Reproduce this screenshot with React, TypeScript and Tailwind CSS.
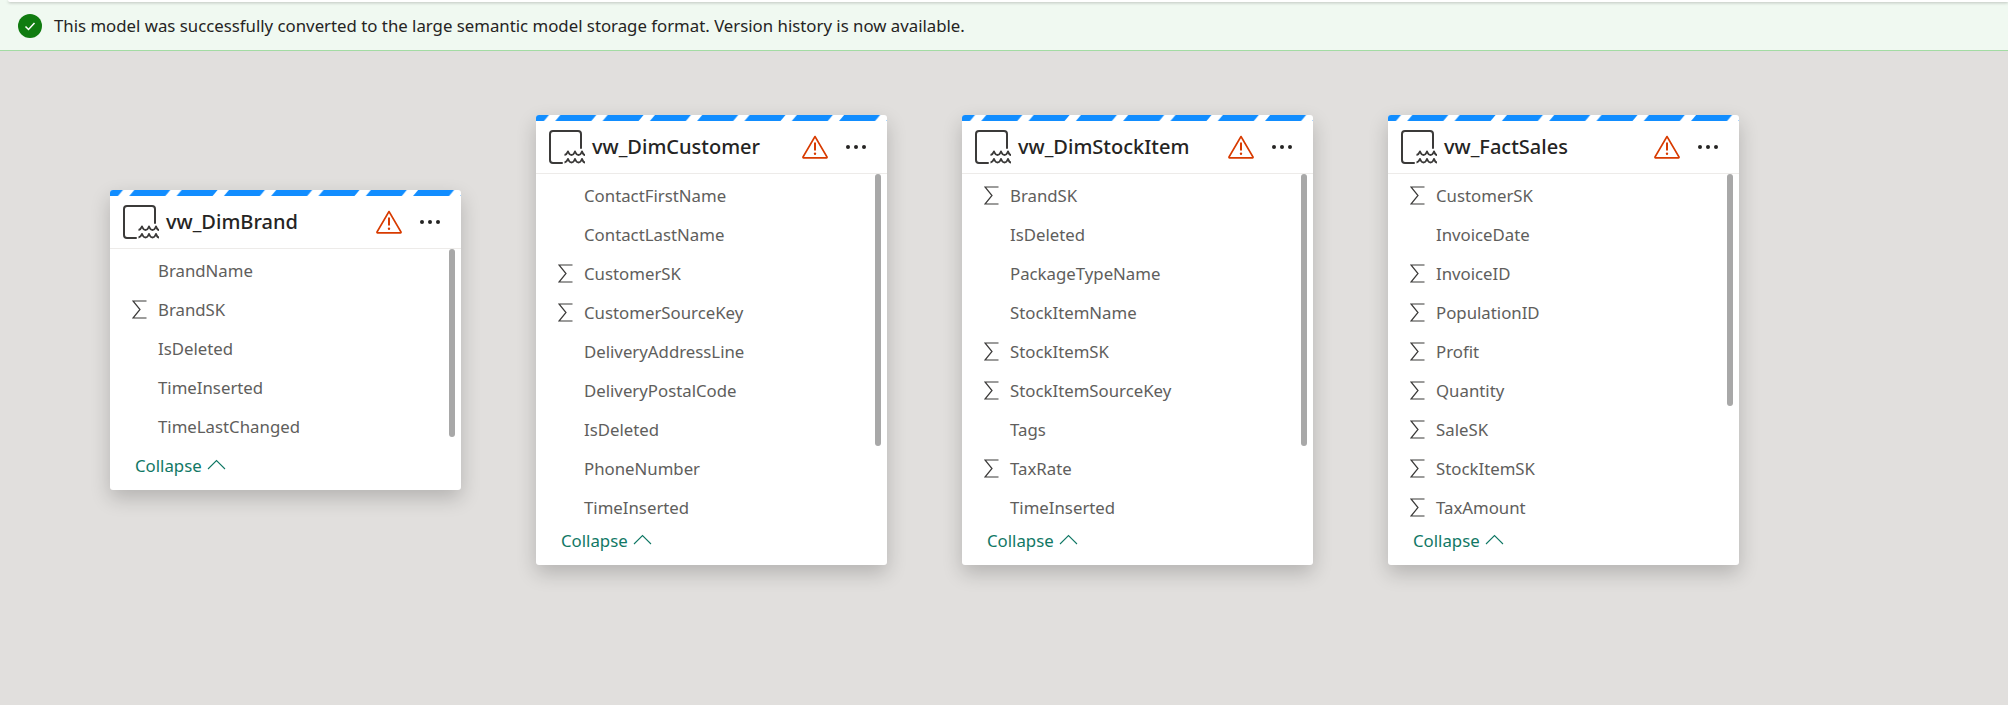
interface Field {
  name: string
  sum?: boolean
}

interface Table {
  name: string
  position: string
  bodyHeight: string
  thumbHeight: string
  fields: Field[]
}

const tables: Table[] = [
  {
    name: 'vw_DimBrand',
    position: 'left-[110px] top-[190px]',
    bodyHeight: 'h-[199px]',
    thumbHeight: 'h-[188px]',
    fields: [
      { name: 'BrandName' },
      { name: 'BrandSK', sum: true },
      { name: 'IsDeleted' },
      { name: 'TimeInserted' },
      { name: 'TimeLastChanged' },
    ],
  },
  {
    name: 'vw_DimCustomer',
    position: 'left-[536px] top-[115px]',
    bodyHeight: 'h-[349px]',
    thumbHeight: 'h-[272px]',
    fields: [
      { name: 'ContactFirstName' },
      { name: 'ContactLastName' },
      { name: 'CustomerSK', sum: true },
      { name: 'CustomerSourceKey', sum: true },
      { name: 'DeliveryAddressLine' },
      { name: 'DeliveryPostalCode' },
      { name: 'IsDeleted' },
      { name: 'PhoneNumber' },
      { name: 'TimeInserted' },
    ],
  },
  {
    name: 'vw_DimStockItem',
    position: 'left-[962px] top-[115px]',
    bodyHeight: 'h-[349px]',
    thumbHeight: 'h-[272px]',
    fields: [
      { name: 'BrandSK', sum: true },
      { name: 'IsDeleted' },
      { name: 'PackageTypeName' },
      { name: 'StockItemName' },
      { name: 'StockItemSK', sum: true },
      { name: 'StockItemSourceKey', sum: true },
      { name: 'Tags' },
      { name: 'TaxRate', sum: true },
      { name: 'TimeInserted' },
    ],
  },
  {
    name: 'vw_FactSales',
    position: 'left-[1388px] top-[115px]',
    bodyHeight: 'h-[349px]',
    thumbHeight: 'h-[232px]',
    fields: [
      { name: 'CustomerSK', sum: true },
      { name: 'InvoiceDate' },
      { name: 'InvoiceID', sum: true },
      { name: 'PopulationID', sum: true },
      { name: 'Profit', sum: true },
      { name: 'Quantity', sum: true },
      { name: 'SaleSK', sum: true },
      { name: 'StockItemSK', sum: true },
      { name: 'TaxAmount', sum: true },
    ],
  },
]

function LakeIcon() {
  return (
    <svg width="37" height="34" viewBox="0 0 37 34" fill="none" stroke="#3b3a39" className="shrink-0">
      <path d="M13 33H4a3 3 0 0 1-3-3V4a3 3 0 0 1 3-3h25a3 3 0 0 1 3 3v14" strokeWidth="2" strokeLinecap="round" />
      <path d="M15.500 25c3-.3 3-3.500 3.500-3.500s.7 3.500 3.500 3.500 3-3.500 3.500-3.500.7 3.500 3.500 3.500 3-3.500 3.500-3.500.7 3.500 3 3.500" strokeWidth="1.800" />
      <path d="M15.500 32.500c3-.3 3-3.500 3.500-3.500s.7 3.500 3.500 3.500 3-3.500 3.500-3.500.7 3.500 3.500 3.500 3-3.500 3.500-3.500.7 3.500 3 3.500" strokeWidth="1.800" />
    </svg>
  )
}

function WarningIcon() {
  return (
    <svg width="26" height="24" viewBox="0 0 26 24" fill="none" className="shrink-0">
      <path d="M13 1.500 25 22a.6.6 0 0 1-.5.9h-23A.6.6 0 0 1 1 22Z" stroke="#d83b01" strokeWidth="1.600" strokeLinejoin="round" />
      <path d="M13 7.500v8" stroke="#d83b01" strokeWidth="2" />
      <circle cx="13" cy="18.800" r="1.200" fill="#d83b01" />
    </svg>
  )
}

function SigmaIcon() {
  return (
    <svg width="15" height="19" viewBox="0 0 15 19" fill="none" stroke="#3b3a39" strokeWidth="1.200" className="shrink-0">
      <path d="M14.500 1H1l7 8.500L1 18h13.500" />
    </svg>
  )
}

function TableCard({ table }: { table: Table }) {
  return (
    <div className={`absolute ${table.position} w-[351px] overflow-hidden rounded-[3px] bg-white shadow-[0_8px_20px_rgba(0,0,0,0.2)]`}>
      <svg width="351" height="6" className="block">
        <defs>
          <pattern id={`stripe-${table.name}`} width="47.3" height="6" patternUnits="userSpaceOnUse" patternTransform="translate(19.300 0)">
            <path d="M5 0h36l-5 6H0Z" fill="#118dff" />
          </pattern>
        </defs>
        <rect width="351" height="6" fill={`url(#stripe-${table.name})`} />
      </svg>
      <div className="flex h-[53px] items-center border-b border-[#edebe9] pl-[13px] pr-[21px]">
        <LakeIcon />
        <span className="ml-[6px] flex-1 text-[20px] font-medium text-[#252423]">{table.name}</span>
        <WarningIcon />
        <span className="ml-[18px] flex gap-[4px]">
          <i className="size-[4px] rounded-full bg-[#252423]" />
          <i className="size-[4px] rounded-full bg-[#252423]" />
          <i className="size-[4px] rounded-full bg-[#252423]" />
        </span>
      </div>
      <div className="relative">
        <div className={`${table.bodyHeight} overflow-hidden pt-[2px]`}>
          {table.fields.map((f) => (
            <div key={f.name} className="flex h-[39px] items-center pl-[22px] text-[16.8px] text-[#605e5c]">
              <span className="flex w-[26px] shrink-0 items-center">{f.sum && <SigmaIcon />}</span>
              <span>{f.name}</span>
            </div>
          ))}
        </div>
        <div className={`absolute right-[6px] top-0 ${table.thumbHeight} w-[6px] rounded-[3px] bg-[#a8a8a8]`} />
      </div>
      <div className="flex h-[42px] items-center pb-[7px] pl-[25px] text-[16.8px] text-[#117865]">
        <span>Collapse</span>
        <svg width="19" height="11" viewBox="0 0 19 11" fill="none" stroke="#117865" strokeWidth="1.100" className="-mt-[3px] ml-[5px]">
          <path d="M1 10 9.500 1.500 18 10" />
        </svg>
      </div>
    </div>
  )
}

export default function App() {
  return (
    <div className="relative h-[705px] w-[2008px] overflow-hidden bg-[#e1dfdd] font-['Noto_Sans',sans-serif]">
      <div className="flex h-[51px] items-center border-b border-[#a3dba3] bg-[#f0f9f1] pl-[18px] pt-[2px] text-[16.8px] text-[#252423]">
        <svg width="24" height="24" viewBox="0 0 24 24" className="shrink-0">
          <circle cx="12" cy="12" r="12" fill="#107c10" />
          <path d="M7.500 12.500 10.500 15.500 16.500 9" fill="none" stroke="#fff" strokeWidth="1.500" />
        </svg>
        <span className="ml-[12px]">This model was successfully converted to the large semantic model storage format. Version history is now available.</span>
      </div>
      <div className="absolute left-[8px] right-0 top-0 h-[2px] rounded-bl-[4px] bg-white shadow-[0_1px_3px_rgba(0,0,0,0.25)]" />
      {tables.map((t) => (
        <TableCard key={t.name} table={t} />
      ))}
    </div>
  )
}
